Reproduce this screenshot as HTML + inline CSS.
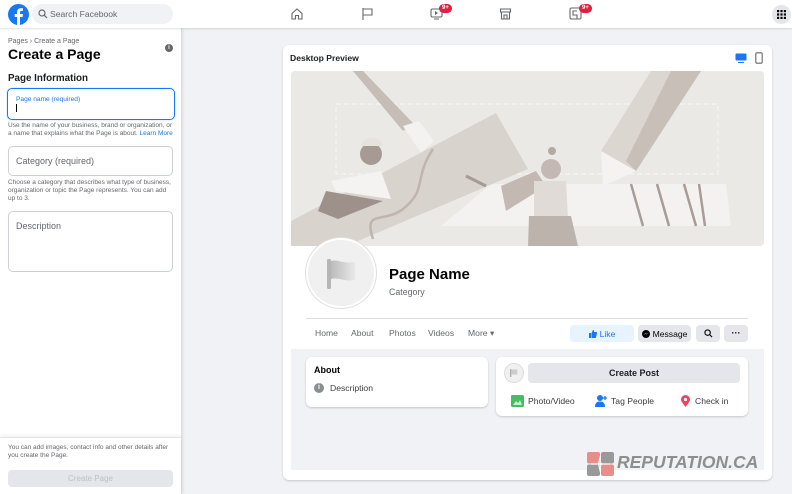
<!DOCTYPE html>
<html><head><meta charset="utf-8"><style>
*{box-sizing:border-box;margin:0;padding:0}
body{width:792px;height:494px;overflow:hidden;background:#f0f2f5;font-family:"Liberation Sans",Arial,sans-serif;position:relative;color:#050505}
.abs{position:absolute}
.top{left:0;top:0;width:792px;height:28px;background:#fff;box-shadow:0 1px 2px rgba(0,0,0,.12);z-index:2}
.side{left:0;top:28px;width:182px;height:466px;background:#fff;border-right:1px solid #dadde1;box-shadow:1px 0 3px rgba(0,0,0,.08)}
.badge{background:#e41e3f;color:#fff;font-size:6px;font-weight:bold;border-radius:6px;padding:1px 3px;line-height:7px}
.fld{border:1px solid #ccd0d5;border-radius:5px;background:#fff}
.help{font-size:6.5px;color:#65676b;line-height:8px;white-space:nowrap}
.card{background:#fff;border-radius:6px;box-shadow:0 1px 2px rgba(0,0,0,.18)}
.tab{font-size:8.6px;color:#65676b;top:328px}
.btn{border-radius:4px;font-size:8.6px;display:flex;align-items:center;justify-content:center;gap:3px;top:325px;height:17px}
</style></head><body>
<div class="abs top">
 <svg class="abs" style="left:8px;top:4px" width="21" height="21" viewBox="0 0 21 21"><circle cx="10.5" cy="10.5" r="10.5" fill="#1877f2"/><path d="M12 21V13h2.6l.4-3H12V8.3c0-.9.3-1.4 1.5-1.4H15V4.3c-.3 0-1.2-.1-2.2-.1-2.2 0-3.7 1.3-3.7 3.8V10H6.7v3H9.1v8z" fill="#fff"/></svg>
 <div class="abs" style="left:32px;top:4px;width:141px;height:20px;border-radius:10px;background:#f0f2f5"></div>
 <svg class="abs" style="left:38px;top:9px" width="10" height="10" viewBox="0 0 10 10"><circle cx="4" cy="4" r="3" fill="none" stroke="#65676b" stroke-width="1.2"/><path d="M6.3 6.3L9 9" stroke="#65676b" stroke-width="1.2"/></svg>
 <div class="abs" style="left:50px;top:9px;font-size:8.6px;color:#65676b">Search Facebook</div>
 <svg class="abs" style="left:290px;top:7px" width="14" height="14" viewBox="0 0 14 14"><path d="M2 6.5L7 2l5 4.5V12H8.5V8.5h-3V12H2z" fill="none" stroke="#65676b" stroke-width="1.1"/></svg>
 <svg class="abs" style="left:361px;top:7px" width="13" height="14" viewBox="0 0 13 14"><path d="M2 1v12M2 2h9v6H2" fill="none" stroke="#65676b" stroke-width="1.1"/></svg>
 <svg class="abs" style="left:430px;top:7px" width="13" height="13" viewBox="0 0 13 13"><rect x="1" y="2" width="11" height="8" rx="1.5" fill="none" stroke="#65676b" stroke-width="1.1"/><path d="M5 4v4l3-2z" fill="#65676b"/><path d="M4 12h5" stroke="#65676b"/></svg>
 <div class="abs badge" style="left:439px;top:4px">9+</div>
 <svg class="abs" style="left:499px;top:7px" width="13" height="13" viewBox="0 0 13 13"><path d="M1.5 2h10v3h-10zM2.5 5v7h8V5M5 12V8h3v4" fill="none" stroke="#65676b" stroke-width="1.1"/></svg>
 <svg class="abs" style="left:569px;top:7px" width="13" height="13" viewBox="0 0 13 13"><rect x="1" y="1" width="11" height="11" rx="1.5" fill="none" stroke="#65676b" stroke-width="1.1"/><path d="M8 4H4v4h4v4" fill="none" stroke="#65676b" stroke-width="1.1"/></svg>
 <div class="abs badge" style="left:579px;top:4px">9+</div>
 <div class="abs" style="left:772px;top:5px;width:19px;height:19px;border-radius:50%;background:#e4e6eb"></div>
 <svg class="abs" style="left:777px;top:10px" width="9" height="9" viewBox="0 0 9 9" fill="#050505"><rect x="0" y="0" width="2.2" height="2.2"/><rect x="3.4" y="0" width="2.2" height="2.2"/><rect x="6.8" y="0" width="2.2" height="2.2"/><rect x="0" y="3.4" width="2.2" height="2.2"/><rect x="3.4" y="3.4" width="2.2" height="2.2"/><rect x="6.8" y="3.4" width="2.2" height="2.2"/><rect x="0" y="6.8" width="2.2" height="2.2"/><rect x="3.4" y="6.8" width="2.2" height="2.2"/><rect x="6.8" y="6.8" width="2.2" height="2.2"/></svg>
</div>

<div class="abs side">
 <div class="abs" style="left:8px;top:10px;font-size:7px;color:#65676b">Pages › Create a Page</div>
 <div class="abs" style="left:8px;top:18px;font-size:14px;font-weight:bold">Create a Page</div>
 <div class="abs" style="left:165px;top:16px;width:8px;height:8px;border-radius:50%;background:#65676b;color:#fff;font-size:6px;text-align:center;line-height:8px;font-weight:bold">i</div>
 <div class="abs" style="left:8px;top:45px;font-size:9.8px;font-weight:bold;color:#1c1e21">Page Information</div>
 <div class="abs fld" style="left:7px;top:60px;width:168px;height:32px;border:1.5px solid #1877f2;box-shadow:0 0 0 1px #e7f3ff"></div>
 <div class="abs" style="left:16px;top:68px;font-size:6.6px;color:#1877f2">Page name (required)</div>
 <div class="abs" style="left:16px;top:76px;width:1px;height:8px;background:#050505"></div>
 <div class="abs help" style="left:8px;top:94px">Use the name of your business, brand or organization, or<br>a name that explains what the Page is about. <span style="color:#1877f2">Learn More</span></div>
 <div class="abs fld" style="left:8px;top:118px;width:165px;height:30px"></div>
 <div class="abs" style="left:16px;top:128px;font-size:9px;color:#65676b">Category (required)</div>
 <div class="abs help" style="left:8px;top:151px">Choose a category that describes what type of business,<br>organization or topic the Page represents. You can add<br>up to 3.</div>
 <div class="abs fld" style="left:8px;top:183px;width:165px;height:61px"></div>
 <div class="abs" style="left:16px;top:193px;font-size:9px;color:#65676b">Description</div>
 <div class="abs" style="left:0;top:409px;width:181px;height:57px;border-top:1px solid #e4e6eb;box-shadow:0 -2px 3px rgba(0,0,0,.05)"></div>
 <div class="abs help" style="left:8px;top:416px">You can add images, contact info and other details after<br>you create the Page.</div>
 <div class="abs" style="left:8px;top:442px;width:165px;height:17px;border-radius:4px;background:#e4e6eb;color:#bcc0c4;font-size:8px;text-align:center;line-height:17px">Create Page</div>
</div>

<div class="abs card" style="left:283px;top:45px;width:489px;height:435px;overflow:hidden">
 <div class="abs" style="left:7px;top:8px;font-size:8.6px;font-weight:bold;color:#1c1e21">Desktop Preview</div>
 <svg class="abs" style="left:452px;top:8px" width="12" height="10" viewBox="0 0 12 10"><rect x="0.5" y="0.5" width="11" height="7" rx="1" fill="#1877f2"/><path d="M3 9.5h6" stroke="#1877f2"/></svg>
 <svg class="abs" style="left:472px;top:7px" width="8" height="12" viewBox="0 0 8 12"><rect x="0.8" y="0.8" width="6.4" height="10.4" rx="1.2" fill="none" stroke="#65676b" stroke-width="1.1"/></svg>
 <div class="abs" style="left:8px;top:304px;width:473px;height:121px;background:#f0f2f5"></div>
</div>

<svg class="abs" style="left:291px;top:71px" width="473" height="175" viewBox="0 0 473 175">
 <rect width="473" height="175" rx="4" fill="#ebe9e6"/>
 <rect x="45" y="33" width="382" height="70" fill="none" stroke="#f6f5f3" stroke-width="1.2" stroke-dasharray="5 3"/>
 <polygon points="200,113 435,113 440,155 150,155" fill="#f3f2f0"/>
 <g stroke="#a89c95" stroke-width="2.5"><path d="M340 113l12 42M366 113l12 42M393 113l12 42M408 113l6 42"/></g>
 <polygon points="62,0 72,0 122,52 112,60" fill="#c6bdb6"/>
 <polygon points="112,55 128,50 143,70 130,82" fill="#f3f2f1"/>
 <polygon points="0,150 205,42 237,98 55,175 0,175" fill="#d8d3cd"/>
 <path d="M142 78c-20 30-5 40-30 60-20 15-40 0-30 30" fill="none" stroke="#c0b5ae" stroke-width="2.5"/>
 <circle cx="80" cy="83" r="11" fill="#a69a94"/>
 <path d="M70 75a11 8 0 0 1 22 0z" fill="#e6e2de"/>
 <polygon points="40,110 90,100 100,128 45,120" fill="#f4f3f2"/>
 <path d="M35 120l-8 20 20 8 45-18" fill="#9e918b"/>
 <polygon points="310,80 360,0 410,0 345,100" fill="#dcd6d0"/>
 <polygon points="345,100 410,0 380,0 335,90" fill="#c8bfb8"/>
 <polygon points="310,80 345,100 312,115" fill="#f4f3f2"/>
 <polygon points="210,115 245,100 255,115 215,140" fill="#c3b9b2"/>
 <circle cx="260" cy="98" r="10" fill="#c3b9b2"/>
 <circle cx="261" cy="80" r="4" fill="#b4aaa3"/>
 <polygon points="243,110 275,110 277,148 243,148" fill="#e0dbd6"/>
 <polygon points="238,145 280,145 287,175 237,175" fill="#bdb3ad"/>
 <path d="M175 105l20 10" stroke="#a69a94" stroke-width="3"/>
</svg>

<div class="abs" style="left:306px;top:238px;width:70px;height:70px;border-radius:50%;background:#f0f0f0;border:2px solid #fff;box-shadow:0 0 0 1px #ddd"></div>
<svg class="abs" style="left:325px;top:258px" width="34" height="32" viewBox="0 0 34 32"><defs><linearGradient id="g" x1="0" x2="1"><stop offset="0" stop-color="#bbb"/><stop offset="1" stop-color="#e8e8e8"/></linearGradient></defs><rect x="2" y="1" width="4" height="30" rx="1.5" fill="#b5b5b5"/><path d="M6 3c8-2 10 3 24 1v18c-12 2-15-3-24-1z" fill="url(#g)"/></svg>
<div class="abs" style="left:389px;top:266px;font-size:15px;font-weight:bold">Page Name</div>
<div class="abs" style="left:389px;top:287px;font-size:8.8px;color:#65676b">Category</div>
<div class="abs" style="left:306px;top:318px;width:442px;height:1px;background:#dadde1"></div>
<div class="abs tab" style="left:315px">Home</div>
<div class="abs tab" style="left:351px">About</div>
<div class="abs tab" style="left:389px">Photos</div>
<div class="abs tab" style="left:428px">Videos</div>
<div class="abs tab" style="left:468px">More ▾</div>
<div class="abs btn" style="left:570px;width:64px;background:#e7f3ff;color:#1877f2">
 <svg width="8" height="8" viewBox="0 0 8 8"><path d="M0 3h2v5H0zM2.5 3L4 0c1 0 1.3.6 1 2h2.5c.5 0 .7.5.5 1L7 7.5c-.2.3-.4.5-.8.5H2.5z" fill="#1877f2"/></svg>Like</div>
<div class="abs btn" style="left:638px;width:53px;background:#e4e6eb;color:#050505">
 <svg width="8" height="8" viewBox="0 0 8 8"><circle cx="4" cy="4" r="4" fill="#050505"/><path d="M1.5 5l2-2 1 1 2-1.5-2 2-1-1z" fill="#fff"/></svg>Message</div>
<div class="abs btn" style="left:696px;width:24px;background:#e4e6eb"><svg width="9" height="9" viewBox="0 0 10 10"><circle cx="4" cy="4" r="3" fill="none" stroke="#050505" stroke-width="1.2"/><path d="M6.3 6.3L9 9" stroke="#050505" stroke-width="1.2"/></svg></div>
<div class="abs btn" style="left:724px;width:24px;background:#e4e6eb;font-weight:bold;font-size:9px;line-height:1">···</div>

<div class="abs card" style="left:306px;top:357px;width:182px;height:50px"></div>
<div class="abs" style="left:314px;top:365px;font-size:9px;font-weight:bold">About</div>
<div class="abs" style="left:314px;top:383px;width:10px;height:10px;border-radius:50%;background:#8a8d91;color:#fff;font-size:7px;font-weight:bold;text-align:center;line-height:10px">i</div>
<div class="abs" style="left:330px;top:383px;font-size:8.6px;color:#3a3b3c">Description</div>

<div class="abs card" style="left:496px;top:357px;width:252px;height:59px"></div>
<div class="abs" style="left:504px;top:363px;width:20px;height:20px;border-radius:50%;background:#f0f0f0;border:1px solid #ddd"></div>
<svg class="abs" style="left:509px;top:368px" width="10" height="10" viewBox="0 0 10 10"><rect x="1" y="1" width="1.3" height="8" fill="#aaa"/><path d="M2.3 1.5h6v5h-6z" fill="#ccc"/></svg>
<div class="abs" style="left:528px;top:363px;width:212px;height:20px;border-radius:4px;background:#e4e6eb;font-size:9px;text-align:center;line-height:20px;font-weight:bold;color:#1c1e21">Create Post</div>
<svg class="abs" style="left:511px;top:395px" width="13" height="12" viewBox="0 0 13 12"><rect x="0" y="0" width="13" height="12" rx="1.5" fill="#45bd62"/><path d="M2 10l3-4 2 2 2-3 2 5z" fill="#c5f0cf"/></svg>
<div class="abs" style="left:528px;top:396px;font-size:8.6px;color:#3a3b3c">Photo/Video</div>
<svg class="abs" style="left:595px;top:394px" width="13" height="13" viewBox="0 0 13 13"><circle cx="5" cy="4" r="3" fill="#1877f2"/><path d="M0 13c0-4 2-5.5 5-5.5s5 1.5 5 5.5z" fill="#1877f2"/><path d="M10 2v4M8 4h4" stroke="#1877f2" stroke-width="1.3"/></svg>
<div class="abs" style="left:611px;top:396px;font-size:8.6px;color:#3a3b3c">Tag People</div>
<svg class="abs" style="left:681px;top:395px" width="9" height="12" viewBox="0 0 9 12"><path d="M4.5 12C1.5 8 0 6 0 4.5a4.5 4.5 0 0 1 9 0C9 6 7.5 8 4.5 12z" fill="#f3425f"/><circle cx="4.5" cy="4.5" r="1.6" fill="#fff"/></svg>
<div class="abs" style="left:695px;top:396px;font-size:8.6px;color:#3a3b3c">Check in</div>

<svg class="abs" style="left:587px;top:452px" width="27" height="24" viewBox="0 0 27 24"><rect x="0" y="0" width="13" height="11.5" rx="2" fill="#e88e8a"/><rect x="14" y="0" width="13" height="11.5" rx="2" fill="#999"/><rect x="0" y="12.5" width="13" height="11.5" rx="2" fill="#999"/><rect x="14" y="12.5" width="13" height="11.5" rx="2" fill="#e88e8a"/><path d="M4 12h19M13.5 4l-2 8 2 8" stroke="#fff" stroke-width="1.2" fill="none"/></svg>
<div class="abs" style="left:617px;top:452px;font-size:17.5px;font-weight:bold;font-style:italic;color:#8e8e8e">REPUTATION.CA</div>
</body></html>
